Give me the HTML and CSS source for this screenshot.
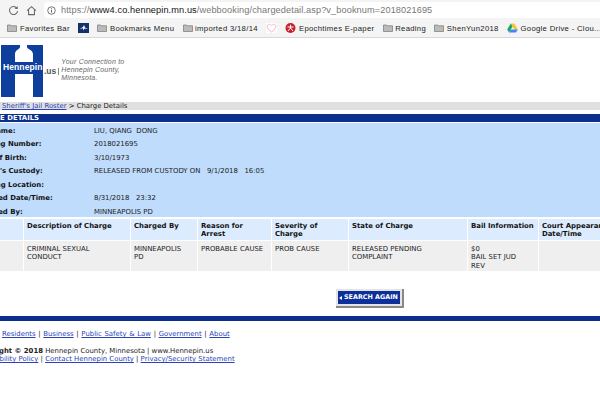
FILE: index.html
```html
<!DOCTYPE html>
<html lang="en">
<head>
<meta charset="utf-8">
<title>Charge Details</title>
<link rel="stylesheet" href="styles.css">
</head>
<body>
<header class="chrome">
  <div class="toolbar">
    <svg class="tool-icon" viewBox="0 0 12 12"><path d="M9.6 3.4A4.4 4.4 0 1 0 10.4 6.5" fill="none" stroke="#666" stroke-width="1.1"/><path d="M10.6 1v3.4H7.2z" fill="#666"/></svg>
    <svg class="tool-icon" viewBox="0 0 12 12"><path d="M1.2 6.2 6 1.8l4.8 4.4M2.8 5.2v5.3h6.4V5.2" fill="none" stroke="#666" stroke-width="1.1"/></svg>
    <div class="url-box">
      <svg class="info-icon" viewBox="0 0 10 10"><circle cx="5" cy="5" r="4.2" fill="none" stroke="#555" stroke-width=".9"/><path d="M5 4.3v3M5 2.5v1" stroke="#555" stroke-width="1"/></svg>
      <span class="url">https://<b>www4.co.hennepin.mn.us</b>/webbooking/chargedetail.asp?v_booknum=2018021695</span>
    </div>
  </div>
  <div class="bookmarks">
    <span class="bm-clip">s</span>
    <span class="bm"><svg class="folder" viewBox="0 0 10 8"><path d="M.5 1h3.2l.7.8h5.1v5.7H.5z" fill="#bbb" stroke="#777" stroke-width=".7"/></svg>Favorites Bar</span>
    <span class="bm"><svg class="fav-box" viewBox="0 0 11 10"><rect width="11" height="10" fill="#14306f"/><path d="M1.500 6 5 4l1-2 1 2.400 3 1.600-3.400-.6L5.400 7.500 5 5.200z" fill="#fff"/></svg></span>
    <span class="bm"><svg class="folder" viewBox="0 0 10 8"><path d="M.5 1h3.2l.7.8h5.1v5.700H.5z" fill="#bbb" stroke="#777" stroke-width=".7"/></svg>Bookmarks Menu</span>
    <span class="bm"><svg class="folder" viewBox="0 0 10 8"><path d="M.5 1h3.2l.7.8h5.1v5.700H.5z" fill="#bbb" stroke="#777" stroke-width=".7"/></svg>imported 3/18/14</span>
    <span class="bm"><svg class="fav-box" viewBox="0 0 11 10"><rect width="11" height="10" fill="#fff"/><path d="M5.500 9C2.500 6.800 1.200 5 1.200 3.200 1.200 1 4 .6 5.500 2.600 7 .6 9.800 1 9.800 3.200 9.800 5 8.500 6.800 5.500 9z" fill="none" stroke="#f2b8c0" stroke-width="1"/></svg></span>
    <span class="bm"><svg class="fav-box" viewBox="0 0 10 10"><circle cx="5" cy="5" r="5" fill="#c8202c"/><path d="M2 4h6M5 1.800V5L2.500 8M5 5l2.500 3" stroke="#fff" stroke-width="1" fill="none"/></svg>Epochtimes E-paper</span>
    <span class="bm"><svg class="folder" viewBox="0 0 10 8"><path d="M.5 1h3.2l.7.8h5.1v5.700H.5z" fill="#bbb" stroke="#777" stroke-width=".7"/></svg>Reading</span>
    <span class="bm"><svg class="folder" viewBox="0 0 10 8"><path d="M.5 1h3.2l.7.8h5.1v5.700H.5z" fill="#bbb" stroke="#777" stroke-width=".7"/></svg>ShenYun2018</span>
    <span class="bm"><svg class="fav-box" viewBox="0 0 11 10"><path d="M3.700.5h3.600l3.500 6H7.200z" fill="#f7c52a"/><path d="M3.700.5 5.500 3.500 2 9.500 .2 6.500z" fill="#1fa463"/><path d="M2 9.500l1.800-3h7l-1.800 3z" fill="#4285f4"/></svg>Google Drive - Clou...</span>
  </div>
</header>
<div class="page">
  <div class="brand">
    <div class="logo">
      <svg class="logo-mark" viewBox="0 0 42 52"><path d="M0 0H19V2C19 4 14 5 14 9V17H32V9C32 5 26 4 26 2V0H42V52H32V29H14V52H0Z" fill="#0e3f9c"/></svg>
      <span class="logo-name">Hennepin</span>
    </div>
    <span class="logo-tld">.us</span>
    <span class="logo-sep"></span>
    <span class="tagline">Your Connection to<br>Hennepin County,<br>Minnesota.</span>
  </div>
  <nav class="crumbs"><a href="#">Sheriff's Jail Roster</a> &gt; Charge Details</nav>
  <h1 class="section-title">CHARGE DETAILS</h1>
  <dl class="details">
    <dt>Full Name:</dt><dd>LIU, QIANG&nbsp; DONG</dd>
    <dt>Booking Number:</dt><dd>2018021695</dd>
    <dt>Date of Birth:</dt><dd>3/10/1973</dd>
    <dt>Sheriff's Custody:</dt><dd>RELEASED FROM CUSTODY ON &nbsp; 9/1/2018 &nbsp; 16:05</dd>
    <dt>Housing Location:</dt><dd></dd>
    <dt>Arrested Date/Time:</dt><dd>8/31/2018 &nbsp; 23:32</dd>
    <dt>Arrested By:</dt><dd>MINNEAPOLIS PD</dd>
  </dl>
  <div class="charges">
    <div class="th">Count</div><div class="th">Description of Charge</div><div class="th">Charged By</div><div class="th">Reason for Arrest</div><div class="th">Severity of Charge</div><div class="th">State of Charge</div><div class="th">Bail Information</div><div class="th">Court Appearance Date/Time</div>
    <div class="td"></div><div class="td">CRIMINAL SEXUAL<br>CONDUCT</div><div class="td">MINNEAPOLIS<br>PD</div><div class="td">PROBABLE CAUSE</div><div class="td">PROB CAUSE</div><div class="td">RELEASED PENDING<br>COMPLAINT</div><div class="td">$0<br>BAIL SET JUD<br>REV</div><div class="td"></div>
  </div>
  <div class="actions"><a class="search-btn" href="#"><span class="arrow"></span>SEARCH AGAIN</a></div>
  <div class="rule"></div>
  <footer class="footer">
    <p class="foot-nav"><a href="#">Home</a> | <a href="#">Residents</a> | <a href="#">Business</a> | <a href="#">Public Safety &amp; Law</a> | <a href="#">Government</a> | <a href="#">About</a></p>
    <p class="foot-copy"><b>Copyright © 2018</b> Hennepin County, Minnesota | www.Hennepin.us</p>
    <p class="foot-links"><a href="#">Accessibility Policy</a> | <a href="#">Contact Hennepin County</a> | <a href="#">Privacy/Security Statement</a></p>
  </footer>
</div>
</body>
</html>
```
FILE: styles.css
```css
html, body { margin: 0; padding: 0; height: 400px; overflow: hidden; background: #fff; }
body { font-family: "DejaVu Sans", Verdana, sans-serif; color: #222; }
a { color: #2a43b8; }
p, h1, dl, dd { margin: 0; }

.chrome { background: #f4f4f4; border-bottom: 1px solid #d8d8d8; font-family: "Liberation Sans", Arial, sans-serif; }
.toolbar { height: 19px; display: flex; align-items: center; padding-top: 1px; box-sizing: border-box; }
.tool-icon { width: 11px; height: 11px; margin-left: 8px; flex: none; }
.tool-icon + .tool-icon { margin-left: 7px; }
.url-box { flex: 1; height: 16px; margin-left: 7px; background: #fff; border-radius: 3px 0 0 3px; display: flex; align-items: center; padding-left: 3px; color: #777; white-space: nowrap; overflow: hidden; }
.info-icon { width: 9px; height: 9px; margin-right: 5px; flex: none; }
.url { font-size: 9.200px; letter-spacing: .1px; }
.url b { font-weight: 400; color: #111; }
.bookmarks { height: 18px; display: flex; align-items: center; gap: 8.300px; margin-left: -5px; font-size: 7.700px; letter-spacing: .32px; color: #222; white-space: nowrap; overflow: hidden; }
.bm-clip { width: 11px; text-align: right; }
.bm { display: flex; align-items: center; gap: 2.500px; }
.folder { width: 10px; height: 8px; flex: none; }
.fav-box { width: 11px; height: 10px; flex: none; }

.page { margin-left: -30px; width: 730px; font-size: 6.900px; line-height: 8.400px; }
.brand { height: 52px; margin: 7px 0 5px 31px; display: flex; align-items: center; }
.logo { position: relative; width: 42px; height: 52px; flex: none; }
.logo-mark { width: 42px; height: 52px; display: block; }
.logo-name { position: absolute; left: 2px; top: 18px; font: 700 8.500px/9px "Liberation Sans", Arial, sans-serif; color: #fff; letter-spacing: .1px; }
.logo-tld { margin-left: 1px; font: 700 8.500px/9px "Liberation Sans", Arial, sans-serif; color: #555; }
.logo-sep { width: 1px; height: 7px; margin: 0 2px 0 2px; background: #888; }
.tagline { font: italic 400 7px/8px "Liberation Sans", Arial, sans-serif; letter-spacing: .2px; color: #666; margin-top: -3px; }

.crumbs { height: 8px; background: #e0e0e0; padding-left: 32px; white-space: nowrap; line-height: 9px; }
.section-title { margin: 4px 0 1px; height: 8px; background: #0c2f8e; padding-left: 3px; font-size: 6.900px; line-height: 8px; font-weight: 700; color: #fff; }
.details { height: 94px; box-sizing: border-box; padding: 1px 0 0 4px; background: #bfdcfd; display: grid; grid-template-columns: 120px 1fr; grid-auto-rows: 13.500px; align-items: center; }
.details dt { font-weight: 700; color: #111; white-space: nowrap; }
.details dd { color: #222; white-space: pre-wrap; }

.charges { margin-top: 2px; display: grid; grid-template-columns: 53px 106px 66px 73px 76px 118px 70px 90px; grid-template-rows: 21px 30px; gap: 1px; }
.th { background: #dcebfd; padding: 3px 3px 0; font-weight: 700; color: #111; }
.td { background: #efefef; padding: 4px 3px 0; color: #222; }

.actions { margin: 18px 0 9px 366px; height: 18px; display: flex; }
.search-btn { box-sizing: border-box; width: 66px; height: 17px; border: 2px solid #e4e4e4; box-shadow: 1px 1px 0 1px #888; background: #0c2f9a; display: flex; align-items: center; gap: 2px; padding-left: 1px; color: #fff; font-size: 6.400px; font-weight: 700; text-decoration: none; white-space: nowrap; }
.arrow { width: 0; height: 0; border: 2px solid transparent; border-right: 3px solid #fff; border-left: 0; }

.rule { height: 5px; background: #0c2f8e; }
.footer { padding: 9px 0 0 4px; white-space: nowrap; }
.foot-nav { word-spacing: .5px; }
.foot-copy { margin-top: 8.500px; }
```
